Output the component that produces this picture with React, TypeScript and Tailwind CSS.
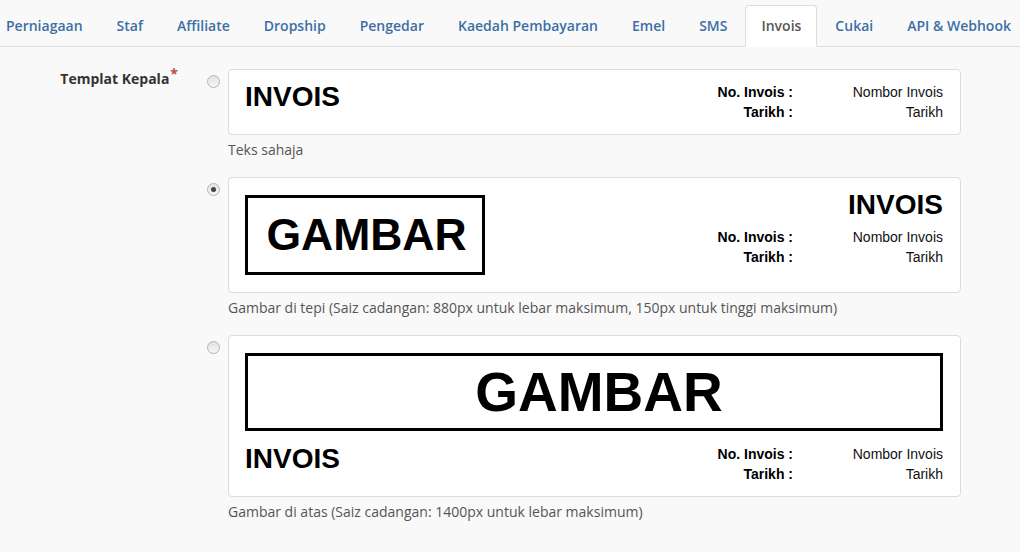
import type { ReactNode } from 'react'

const tabs = [
  'Perniagaan',
  'Staf',
  'Affiliate',
  'Dropship',
  'Pengedar',
  'Kaedah Pembayaran',
  'Emel',
  'SMS',
  'Invois',
  'Cukai',
  'API & Webhook',
]

function Radio({ checked }: { checked?: boolean }) {
  return (
    <div className="mt-[3px] flex h-[13px] w-[13px] shrink-0 items-center justify-center rounded-full border border-[#b5b5b5] bg-gradient-to-b from-[#e2e2e2] to-[#f7f7f7]">
      {checked ? <div className="h-[5px] w-[5px] rounded-full bg-[#444]" /> : null}
    </div>
  )
}

function Meta() {
  return (
    <div className="grid grid-cols-[auto_150px] text-right text-[14px] leading-5 text-[#111]">
      <div className="font-bold text-black">No. Invois :</div>
      <div>Nombor Invois</div>
      <div className="font-bold text-black">Tarikh :</div>
      <div>Tarikh</div>
    </div>
  )
}

function Title({ className = '' }: { className?: string }) {
  return <div className={`text-[28px] font-bold leading-[28px] text-black ${className}`}>INVOIS</div>
}

function Option({
  checked,
  caption,
  children,
}: {
  checked?: boolean
  caption: string
  children: ReactNode
}) {
  return (
    <div className="mb-[17px] flex gap-[8px]">
      <div className="flex w-[13px] justify-center pt-[3px]">
        <Radio checked={checked} />
      </div>
      <div className="w-[733px]">
        <div className="rounded-[4px] border border-[#dcdcdc] bg-white py-3 pl-4 pr-[17px] font-['Liberation_Sans',Arial,sans-serif]">
          {children}
        </div>
        <div className="mt-[5px] text-[14px] leading-5 text-[#555]">{caption}</div>
      </div>
    </div>
  )
}

export default function App() {
  return (
    <div className="min-h-[552px] w-[1020px] overflow-hidden bg-[#f9f9f9] font-['Open_Sans',sans-serif]">
      <div className="mt-[5px] flex border-b border-[#dddddd]">
        <ul className="-mb-px ml-[-10px] flex whitespace-nowrap">
          {tabs.map((t) => {
            const active = t === 'Invois'
            return (
              <li key={t} className="mr-[2px]">
                <div
                  className={
                    active
                      ? 'rounded-t-[4px] border border-[#dddddd] border-b-white bg-white px-[15px] py-[10px] text-[14px] font-semibold leading-5 text-[#555]'
                      : 'border border-transparent px-[15px] py-[10px] text-[14px] font-semibold leading-5 text-[#3d6fa6]'
                  }
                >
                  {t}
                </div>
              </li>
            )
          })}
        </ul>
      </div>

      <div className="flex pt-[22px]">
        <div className="w-[178px] text-right text-[14px] font-bold leading-5 text-[#333]">
          Templat Kepala<span className="relative -top-[5px] ml-[1px] text-[#b94a48]">*</span>
        </div>
        <div className="ml-[29px]">
          <Option caption="Teks sahaja">
            <div className="flex items-start justify-between">
              <Title className="mt-[1px]" />
              <Meta />
            </div>
          </Option>

          <Option checked caption="Gambar di tepi (Saiz cadangan: 880px untuk lebar maksimum, 150px untuk tinggi maksimum)">
            <div className="flex items-start justify-between">
              <div className="my-[5px] flex h-[80px] w-[240px] items-center justify-center border-[3px] border-black pl-[3px] text-[44.5px] font-bold leading-none text-black">
                GAMBAR
              </div>
              <div className="flex flex-col items-end">
                <Title className="mt-[1px]" />
                <div className="mt-2">
                  <Meta />
                </div>
              </div>
            </div>
          </Option>

          <Option caption="Gambar di atas (Saiz cadangan: 1400px untuk lebar maksimum)">
            <div className="mt-[5px] flex h-[78px] items-center justify-center border-[3px] border-black pl-[10px] text-[55px] font-bold leading-none text-black">
              GAMBAR
            </div>
            <div className="mt-[13px] flex items-start justify-between">
              <Title className="mt-[1px]" />
              <Meta />
            </div>
          </Option>
        </div>
      </div>
    </div>
  )
}
